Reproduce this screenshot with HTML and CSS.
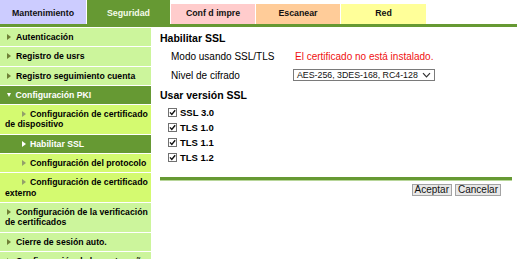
FILE: index.html
```html
<!DOCTYPE html>
<html lang="es">
<head>
  <meta charset="UTF-8">
  <meta name="viewport" content="width=device-width, initial-scale=1.0">
  <title>Habilitar SSL</title>
  <link rel="stylesheet" href="styles.css">
</head>
<body>
  <!-- pestañas superiores -->
  <div class="tabs">
    <div class="tab tab-mant">Mantenimiento</div>
    <div class="tab tab-seg">Seguridad</div>
    <div class="tab tab-conf">Conf d impre</div>
    <div class="tab tab-scan">Escanear</div>
    <div class="tab tab-red">Red</div>
  </div>

  <div class="page">
    <!-- menú lateral -->
    <ul class="menu">
      <li><span class="arrow"></span>Autenticación</li>
      <li><span class="arrow"></span>Registro de usrs</li>
      <li><span class="arrow"></span>Registro seguimiento cuenta</li>
      <li class="open"><span class="arrow-down"></span>Configuración PKI</li>
      <li class="sub"><span class="arrow"></span>Configuración de certificado de dispositivo</li>
      <li class="sub current"><span class="arrow"></span>Habilitar SSL</li>
      <li class="sub"><span class="arrow"></span>Configuración del protocolo</li>
      <li class="sub"><span class="arrow"></span>Configuración de certificado externo</li>
      <li><span class="arrow"></span>Configuración de la verificación de certificados</li>
      <li><span class="arrow"></span>Cierre de sesión auto.</li>
      <li><span class="arrow"></span>Configuración de la contraseña del administrador</li>
    </ul>

    <div class="main">
      <h2>Habilitar SSL</h2>
      <div class="row">
        <span class="label">Modo usando SSL/TLS</span>
        <span class="warn">El certificado no está instalado.</span>
      </div>
      <div class="row">
        <span class="label">Nivel de cifrado</span>
        <div class="select">
          <span>AES-256, 3DES-168, RC4-128</span>
          <svg class="chevron" viewBox="0 0 9 6"><path d="M1 1.2 L4.5 4.8 L8 1.2" fill="none" stroke="#333" stroke-width="1.2"/></svg>
        </div>
      </div>

      <h2 class="second">Usar versión SSL</h2>
      <label class="check"><svg class="box" viewBox="0 0 9 9"><rect x="0.5" y="0.5" width="8" height="8" fill="#fff" stroke="#707070"/><path d="M2 4.4 L3.8 6.4 L7.2 2.2" fill="none" stroke="#111" stroke-width="1.4"/></svg>SSL 3.0</label>
      <label class="check"><svg class="box" viewBox="0 0 9 9"><rect x="0.5" y="0.5" width="8" height="8" fill="#fff" stroke="#707070"/><path d="M2 4.4 L3.8 6.4 L7.2 2.2" fill="none" stroke="#111" stroke-width="1.4"/></svg>TLS 1.0</label>
      <label class="check"><svg class="box" viewBox="0 0 9 9"><rect x="0.5" y="0.5" width="8" height="8" fill="#fff" stroke="#707070"/><path d="M2 4.4 L3.8 6.4 L7.2 2.2" fill="none" stroke="#111" stroke-width="1.4"/></svg>TLS 1.1</label>
      <label class="check"><svg class="box" viewBox="0 0 9 9"><rect x="0.5" y="0.5" width="8" height="8" fill="#fff" stroke="#707070"/><path d="M2 4.4 L3.8 6.4 L7.2 2.2" fill="none" stroke="#111" stroke-width="1.4"/></svg>TLS 1.2</label>

      <div class="rule"></div>
      <div class="buttons">
        <button type="button">Aceptar</button>
        <button type="button">Cancelar</button>
      </div>
    </div>
  </div>
</body>
</html>
```

FILE: styles.css
```css
html, body {
  height: 100%;
  overflow: hidden;
}
body {
  margin: 0;
  font-family: "Liberation Sans", Arial, sans-serif;
  background-color: #fff;
  color: #000;
}

/* pestañas */
.tabs {
  display: flex;
  align-items: flex-end;
  gap: 1px;
  height: 24px;
  border-bottom: 3px solid #669933;
}
.tab {
  height: 20px;
  line-height: 19px;
  text-align: center;
  font-size: 8.8px;
  font-weight: bold;
  color: #111;
}
.tab-mant {
  width: 86px;
  padding-top: 4px;
  background-color: #ccccff;
}
.tab-seg {
  width: 83px;
  padding-top: 4px;
  background-color: #669933;
  color: #f4fbe8;
}
.tab-conf {
  width: 84px;
  background-color: #ffcccc;
}
.tab-scan {
  width: 84px;
  background-color: #ffcc99;
}
.tab-red {
  width: 85px;
  background-color: #ffff99;
}

.page {
  display: flex;
}

/* menú lateral */
.menu {
  flex: none;
  width: 151px;
  margin: 0;
  padding: 0;
  list-style: none;
}
.menu li {
  border-top: 1px solid #fff;
  padding: 4px 0 4px 5px;
  font-size: 8.7px;
  line-height: 10.3px;
  font-weight: bold;
  background-color: #ccf59c;
}
.menu li.sub {
  background-color: #d4fa70;
}
.menu li.open,
.menu li.current {
  background-color: #669933;
  color: #fff;
}
.arrow {
  display: inline-block;
  width: 0;
  height: 0;
  border-left: 4px solid #6f7f35;
  border-top: 3px solid transparent;
  border-bottom: 3px solid transparent;
  margin: 0 5px 0 2px;
}
.sub .arrow {
  border-left-color: #93a06a;
  margin: 0 4px 0 17px;
}
.current .arrow {
  border-left-color: #fff;
}
.arrow-down {
  display: inline-block;
  width: 0;
  height: 0;
  border-top: 4px solid #fff;
  border-left: 2.5px solid transparent;
  border-right: 2.5px solid transparent;
  margin: 0 4.5px 0 2px;
  vertical-align: 1px;
}

/* contenido */
.main {
  flex: 1;
  padding: 5px 5px 0 9px;
}
h2 {
  margin: 0 0 2px;
  font-size: 10.5px;
  line-height: 13px;
  font-weight: bold;
}
h2.second {
  margin-top: 5px;
}
.row {
  display: flex;
  align-items: center;
  height: 18px;
  padding-left: 11px;
  font-size: 10px;
}
.row + .row {
  margin-top: 1px;
}
.label {
  width: 122px;
  flex: none;
}
.warn {
  padding-left: 2px;
  color: #f01010;
}
.select {
  box-sizing: border-box;
  display: flex;
  align-items: center;
  justify-content: space-between;
  width: 142px;
  height: 12px;
  padding: 0 3px 0 3px;
  border: 1px solid #7a7a7a;
  font-size: 8.8px;
  color: #111;
}
.chevron {
  width: 9px;
  height: 6px;
}
.check {
  display: flex;
  align-items: center;
  height: 15px;
  padding-left: 8px;
  font-size: 9.5px;
  font-weight: bold;
}
.check:first-of-type {
  margin-top: 3px;
}
.box {
  width: 9px;
  height: 9px;
  margin-right: 3px;
}
.rule {
  height: 3px;
  margin-top: 11.5px;
  background-color: #669933;
  border-bottom: 1px solid #b8d69a;
}
.buttons {
  display: flex;
  justify-content: flex-end;
  gap: 3px;
  margin-top: 3.5px;
  padding-right: 11px;
}
.buttons button {
  box-sizing: border-box;
  height: 12px;
  padding: 0 2px;
  border: 1px solid #a3a3a3;
  background-color: #e8e8e8;
  font-family: "Liberation Sans", Arial, sans-serif;
  font-size: 10px;
  line-height: 10px;
  color: #111;
}
```
